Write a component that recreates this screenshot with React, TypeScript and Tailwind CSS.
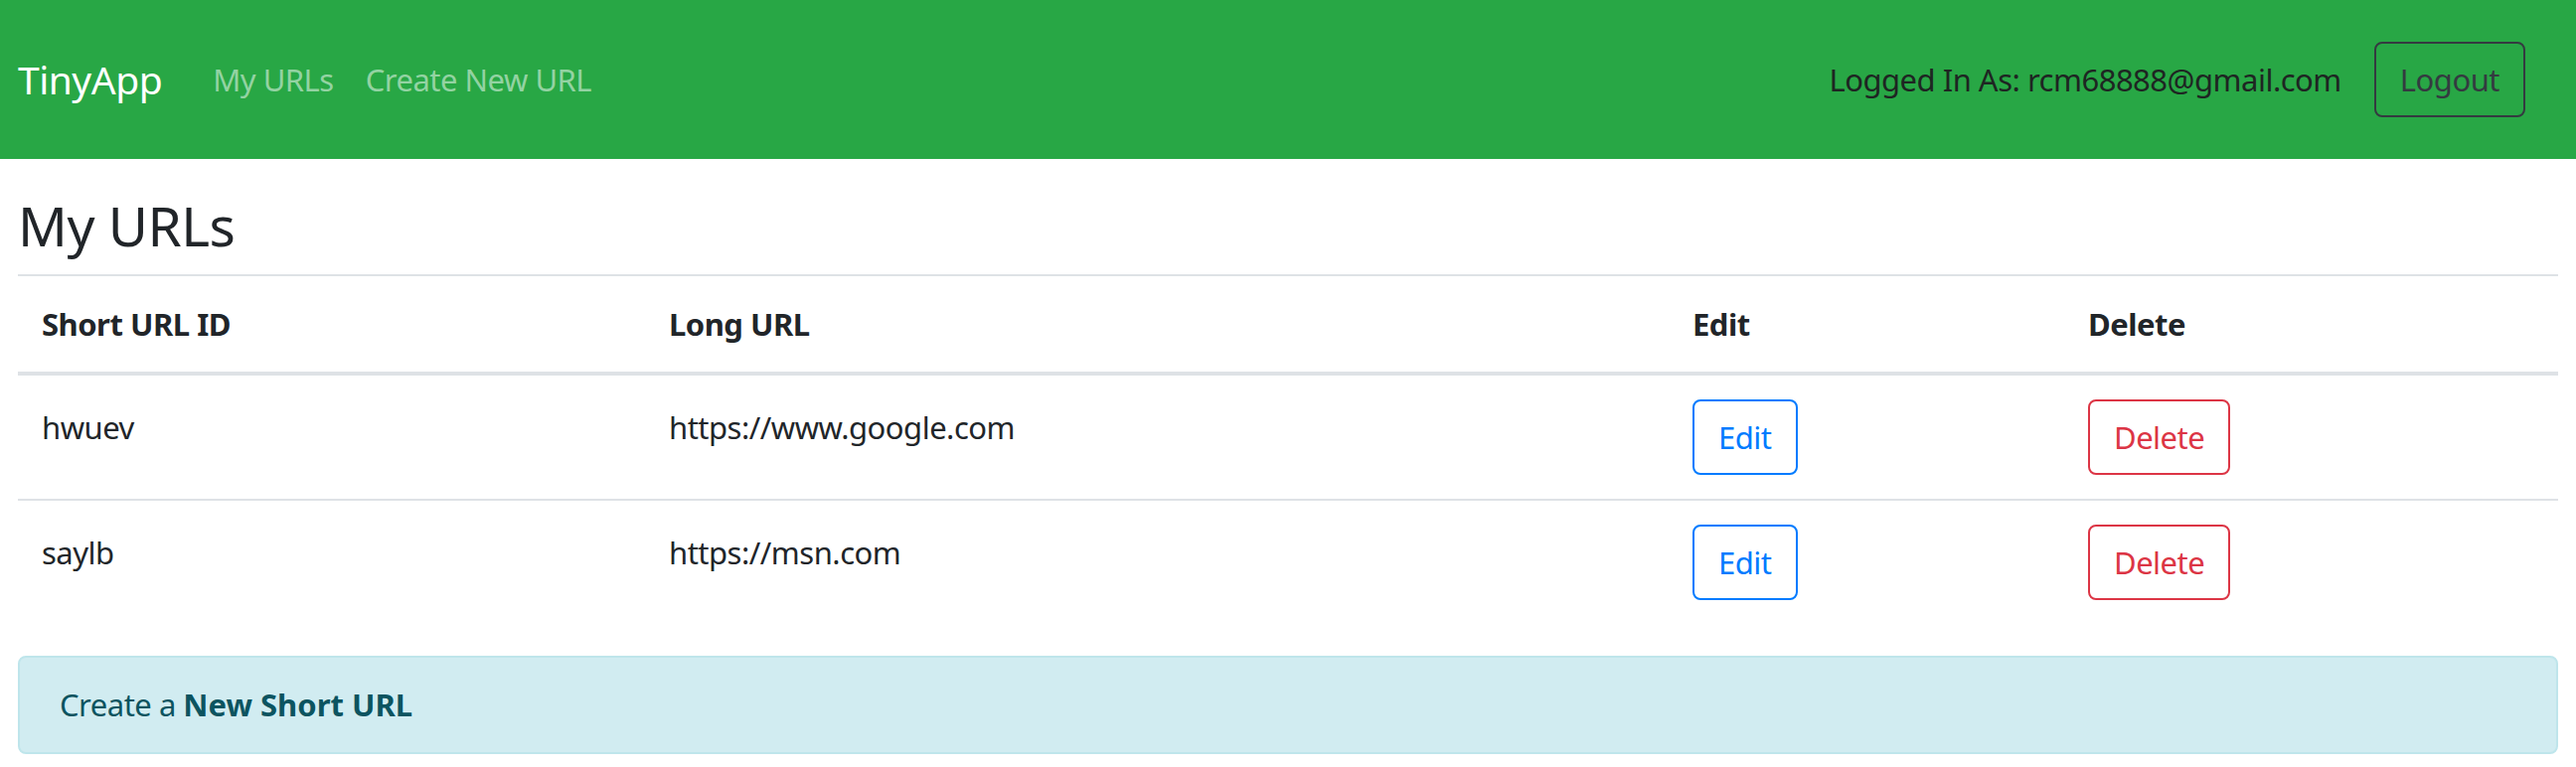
import React from 'react';

const urls = [
  { id: 'hwuev', long: 'https://www.google.com' },
  { id: 'saylb', long: 'https://msn.com' },
];

const font = { fontFamily: '"Noto Sans", "Open Sans", sans-serif' };

const App = () => {
  return (
    <div className="min-h-screen bg-white text-[#212529] tracking-[-0.5px]" style={font}>
      <nav className="h-[160px] bg-[#28a745] flex items-center pl-[18px] pr-[51px]">
        <a className="text-[39px] leading-[60px] text-white mr-[35px]">TinyApp</a>
        <ul className="flex items-center">
          <li>
            <a className="px-[16px] text-[31px] leading-[48px] text-[#93d3a2]">My URLs</a>
          </li>
          <li>
            <a className="px-[16px] text-[31px] leading-[48px] text-[#93d3a2]">Create New URL</a>
          </li>
        </ul>
        <div className="ml-auto flex items-center gap-[33px]">
          <span className="text-[31px] leading-[48px] text-[#1e2522]">Logged In As: rcm68888@gmail.com</span>
          <button className="h-[76px] px-[24px] border-2 border-[#343a40] rounded-[8px] text-[31px] leading-[48px] text-[#343a40]">
            Logout
          </button>
        </div>
      </nav>

      <main className="px-[18px]">
        <h1 className="h-[116px] pt-[33px] text-[55px] leading-[68px] font-normal">My URLs</h1>

        <table className="w-full table-fixed border-collapse text-[31px] leading-[48px]">
          <colgroup>
            <col className="w-[631px]" />
            <col className="w-[1030px]" />
            <col className="w-[398px]" />
            <col />
          </colgroup>
          <thead>
            <tr className="border-t-2 border-b-4 border-[#dee2e6]">
              <th className="p-[24px] text-left font-bold">Short URL ID</th>
              <th className="p-[24px] text-left font-bold">Long URL</th>
              <th className="p-[24px] text-left font-bold">Edit</th>
              <th className="p-[24px] text-left font-bold">Delete</th>
            </tr>
          </thead>
          <tbody>
            {urls.map((u, i) => (
              <tr key={u.id} className={i > 0 ? 'border-t-2 border-[#dee2e6]' : ''}>
                <td className="px-[24px] pt-[28px] pb-[20px] align-top">{u.id}</td>
                <td className="px-[24px] pt-[28px] pb-[20px] align-top">{u.long}</td>
                <td className="p-[24px] align-top">
                  <button className="h-[76px] px-[24px] border-2 border-[#007bff] rounded-[8px] text-[#007bff]">
                    Edit
                  </button>
                </td>
                <td className="p-[24px] align-top">
                  <button className="h-[76px] px-[24px] border-2 border-[#dc3545] rounded-[8px] text-[#dc3545]">
                    Delete
                  </button>
                </td>
              </tr>
            ))}
          </tbody>
        </table>

        <div className="mt-[32px] h-[99px] flex items-center px-[40px] border-2 border-[#bee5eb] bg-[#d1ecf1] rounded-[8px] text-[31px] text-[#0c5460]">
          <span>
            Create a <b className="font-bold tracking-normal">New Short URL</b>
          </span>
        </div>
      </main>
    </div>
  );
};

export default App;
